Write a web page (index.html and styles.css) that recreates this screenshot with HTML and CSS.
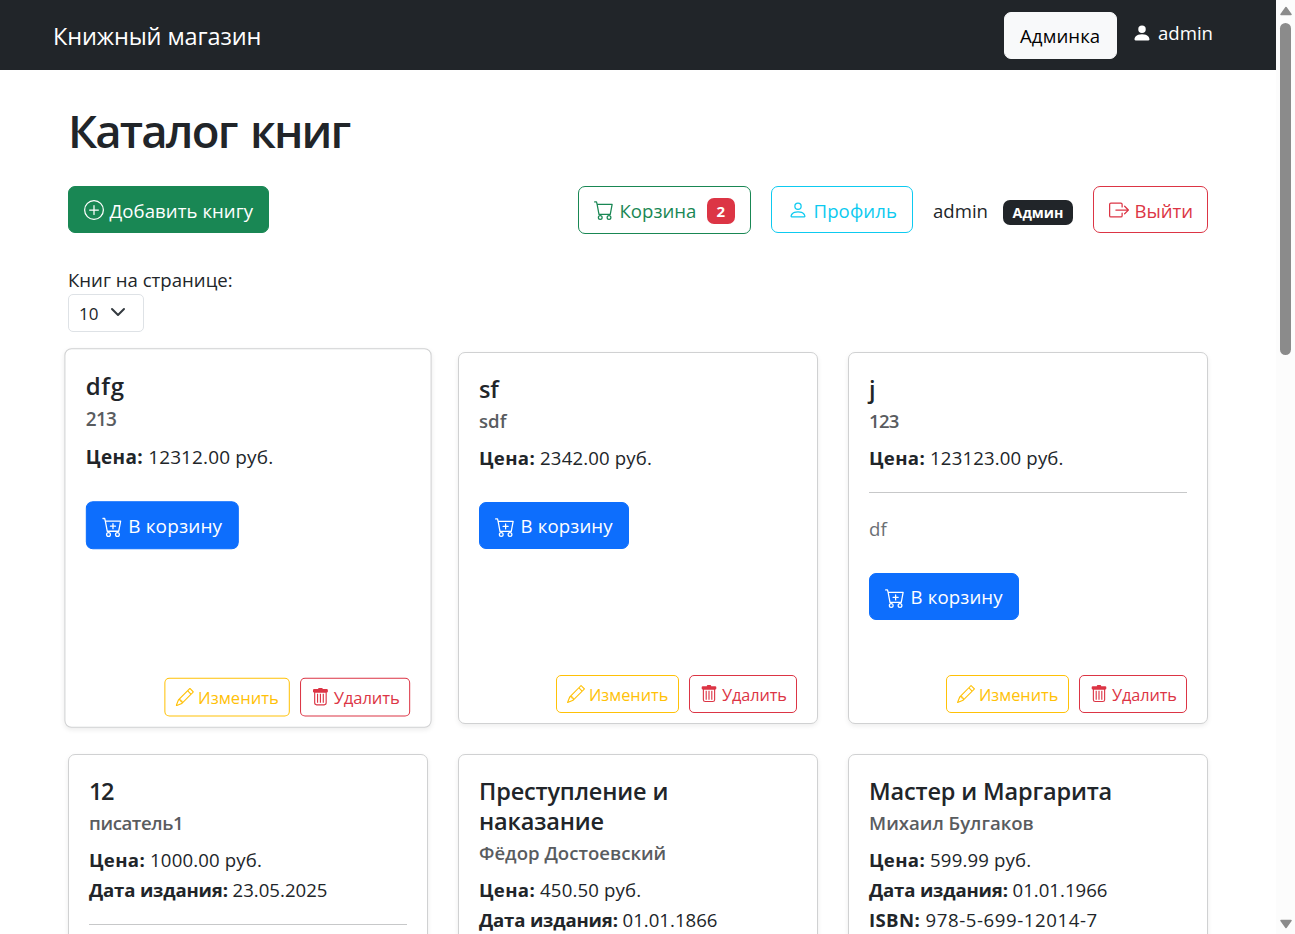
FILE: index.html
```
<!DOCTYPE html>
<html lang="ru">
<head>
<meta charset="utf-8">
<title>Книжный магазин</title>
<link rel="stylesheet" href="styles.css">
</head>
<body>
<svg class="sprite" aria-hidden="true">
  <symbol id="plus-circle" viewBox="0 0 16 16"><path d="M8 15A7 7 0 1 1 8 1a7 7 0 0 1 0 14m0 1A8 8 0 1 0 8 0a8 8 0 0 0 0 16"/><path d="M8 4a.5.5 0 0 1 .5.5v3h3a.5.5 0 0 1 0 1h-3v3a.5.5 0 0 1-1 0v-3h-3a.5.5 0 0 1 0-1h3v-3A.5.5 0 0 1 8 4"/></symbol>
  <symbol id="cart" viewBox="0 0 16 16"><path d="M0 1.500A.5.5 0 0 1 .5 1H2a.5.5 0 0 1 .485.379L2.890 3H14.500a.5.5 0 0 1 .491.592l-1.500 8A.5.5 0 0 1 13 12H4a.5.5 0 0 1-.491-.408L2.010 3.607 1.610 2H.5a.5.5 0 0 1-.5-.5M3.102 4l1.313 7h8.170l1.313-7zM5 12a2 2 0 1 0 0 4 2 2 0 0 0 0-4m7 0a2 2 0 1 0 0 4 2 2 0 0 0 0-4m-7 1a1 1 0 1 1 0 2 1 1 0 0 1 0-2m7 0a1 1 0 1 1 0 2 1 1 0 0 1 0-2"/></symbol>
  <symbol id="cart-plus" viewBox="0 0 16 16"><path d="M9 5.500a.5.5 0 0 0-1 0V7H6.500a.5.5 0 0 0 0 1H8v1.500a.5.5 0 0 0 1 0V8h1.500a.5.5 0 0 0 0-1H9z"/><path d="M.5 1a.5.5 0 0 0 0 1h1.110l.401 1.607 1.498 7.985A.5.5 0 0 0 4 12h1a2 2 0 1 0 0 4 2 2 0 0 0 0-4h7a2 2 0 1 0 0 4 2 2 0 0 0 0-4h1a.5.5 0 0 0 .491-.408l1.500-8A.5.5 0 0 0 14.500 3H2.890l-.405-1.621A.5.5 0 0 0 2 1zm3.915 10L3.102 4h10.796l-1.313 7zM6 14a1 1 0 1 1-2 0 1 1 0 0 1 2 0m7 0a1 1 0 1 1-2 0 1 1 0 0 1 2 0"/></symbol>
  <symbol id="person" viewBox="0 0 16 16"><path d="M8 8a3 3 0 1 0 0-6 3 3 0 0 0 0 6m2-3a2 2 0 1 1-4 0 2 2 0 0 1 4 0m4 8c0 1-1 1-1 1H3s-1 0-1-1 1-4 6-4 6 3 6 4m-1-.004c-.001-.246-.154-.986-.832-1.664C11.516 10.680 10.289 10 8 10s-3.516.680-4.168 1.332c-.678.678-.830 1.418-.832 1.664z"/></symbol>
  <symbol id="person-fill" viewBox="0 0 16 16"><path d="M3 14s-1 0-1-1 1-4 6-4 6 3 6 4-1 1-1 1zm5-6a3 3 0 1 0 0-6 3 3 0 0 0 0 6"/></symbol>
  <symbol id="exit" viewBox="0 0 16 16"><path fill-rule="evenodd" d="M10 12.500a.5.5 0 0 1-.5.5h-8a.5.5 0 0 1-.5-.5v-9a.5.5 0 0 1 .5-.5h8a.5.5 0 0 1 .5.5v2a.5.5 0 0 0 1 0v-2A1.500 1.500 0 0 0 9.500 2h-8A1.500 1.500 0 0 0 0 3.500v9A1.500 1.500 0 0 0 1.500 14h8a1.500 1.500 0 0 0 1.500-1.500v-2a.5.5 0 0 0-1 0z"/><path fill-rule="evenodd" d="M15.854 8.354a.5.5 0 0 0 0-.708l-3-3a.5.5 0 0 0-.708.708L14.293 7.500H5.500a.5.5 0 0 0 0 1h8.793l-2.147 2.146a.5.5 0 0 0 .708.708z"/></symbol>
  <symbol id="pencil" viewBox="0 0 16 16"><path d="M12.146.146a.5.5 0 0 1 .708 0l3 3a.5.5 0 0 1 0 .708l-10 10a.5.5 0 0 1-.168.110l-5 2a.5.5 0 0 1-.650-.650l2-5a.5.5 0 0 1 .110-.168zM11.207 2.500 13.500 4.793 14.793 3.500 12.500 1.207zm1.586 3L10.500 3.207 4 9.707V10h.5a.5.5 0 0 1 .5.5v.5h.5a.5.5 0 0 1 .5.5v.5h.293zm-9.761 5.175-.106.106-1.528 3.821 3.821-1.528.106-.106A.5.5 0 0 1 5 12.500V12h-.5a.5.5 0 0 1-.5-.5V11h-.5a.5.5 0 0 1-.468-.325"/></symbol>
  <symbol id="trash" viewBox="0 0 16 16"><path d="M2.500 1a1 1 0 0 0-1 1v1a1 1 0 0 0 1 1H13.500a1 1 0 0 0 1-1V2a1 1 0 0 0-1-1H10a1 1 0 0 0-1-1H7a1 1 0 0 0-1 1z"/><path fill-rule="evenodd" d="M2.500 3.500h11V13a2.200 2.200 0 0 1-2.200 2.200H4.700A2.200 2.200 0 0 1 2.500 13zM3.500 4v9a1.200 1.200 0 0 0 1.200 1.200h6.600a1.200 1.200 0 0 0 1.200-1.200V4zM5 5h1v8H5zm2.500 0h1v8h-1zM10 5h1v8h-1z"/></symbol>
</svg>
<div class="window">
  <div class="page">
    <nav class="navbar">
      <a class="brand">Книжный магазин</a>
      <div class="nav-right">
        <a class="btn btn-light">Админка</a>
        <span class="nav-user"><svg class="icon"><use href="#person-fill"/></svg><span>admin</span></span>
      </div>
    </nav>
    <main class="container">
      <h1 class="heading">Каталог книг</h1>
      <div class="toolbar">
        <a class="btn btn-success"><svg class="icon"><use href="#plus-circle"/></svg><span>Добавить книгу</span></a>
        <div class="actions">
          <a class="btn btn-cart"><svg class="icon"><use href="#cart"/></svg><span>Корзина</span><b class="count">2</b></a>
          <a class="btn btn-profile"><svg class="icon"><use href="#person"/></svg><span>Профиль</span></a>
          <span class="user">admin</span>
          <b class="role">Админ</b>
          <a class="btn btn-logout"><svg class="icon"><use href="#exit"/></svg><span>Выйти</span></a>
        </div>
      </div>
      <div class="per-page">
        <label class="per-page-label">Книг на странице:</label>
        <div class="select"><span>10</span><svg class="chevron" viewBox="0 0 16 16"><path d="m2 5 6 6 6-6"/></svg></div>
      </div>
      <div class="grid">
        <article class="card card-hover">
          <h5 class="title latin">dfg</h5><h6 class="author number">213</h6>
          <p class="info"><b>Цена:</b> 12312.00 руб.</p>
          <a class="btn btn-primary"><svg class="icon"><use href="#cart-plus"/></svg><span>В корзину</span></a>
          <div class="card-actions"><a class="btn-sm edit"><svg class="icon"><use href="#pencil"/></svg><span>Изменить</span></a><a class="btn-sm delete"><svg class="icon"><use href="#trash"/></svg><span>Удалить</span></a></div>
        </article>
        <article class="card">
          <h5 class="title">sf</h5><h6 class="author">sdf</h6>
          <p class="info"><b>Цена:</b> 2342.00 руб.</p>
          <a class="btn btn-primary"><svg class="icon"><use href="#cart-plus"/></svg><span>В корзину</span></a>
          <div class="card-actions"><a class="btn-sm edit"><svg class="icon"><use href="#pencil"/></svg><span>Изменить</span></a><a class="btn-sm delete"><svg class="icon"><use href="#trash"/></svg><span>Удалить</span></a></div>
        </article>
        <article class="card">
          <h5 class="title">j</h5><h6 class="author number">123</h6>
          <p class="info"><b>Цена:</b> 123123.00 руб.</p>
          <hr class="rule">
          <p class="description">df</p>
          <a class="btn btn-primary"><svg class="icon"><use href="#cart-plus"/></svg><span>В корзину</span></a>
          <div class="card-actions"><a class="btn-sm edit"><svg class="icon"><use href="#pencil"/></svg><span>Изменить</span></a><a class="btn-sm delete"><svg class="icon"><use href="#trash"/></svg><span>Удалить</span></a></div>
        </article>
        <article class="card">
          <h5 class="title number title-number">12</h5><h6 class="author pen-name">писатель1</h6>
          <p class="info"><b>Цена:</b> 1000.00 руб.<br><span class="date"><b>Дата издания:</b> 23.05.2025</span></p>
          <hr class="rule">
        </article>
        <article class="card">
          <h5 class="title">Преступление и<br>наказание</h5><h6 class="author">Фёдор Достоевский</h6>
          <p class="info"><b>Цена:</b> 450.50 руб.<br><span class="date"><b>Дата издания:</b> 01.01.1866</span></p>
        </article>
        <article class="card">
          <h5 class="title">Мастер и Маргарита</h5><h6 class="author">Михаил Булгаков</h6>
          <p class="info"><b>Цена:</b> 599.99 руб.<br><span class="date"><b>Дата издания:</b> 01.01.1966</span><br><span class="isbn"><b>ISBN:</b> 978-5-699-12014-7</span></p>
        </article>
      </div>
    </main>
  </div>
  <aside class="scrollbar">
    <svg class="arrow" viewBox="0 0 12 10"><path d="M6 1.500 11 8.500H1z"/></svg>
    <div class="thumb"></div>
    <svg class="arrow arrow-down" viewBox="0 0 12 10"><path d="M6 8.500 11 1.500H1z"/></svg>
  </aside>
</div>
</body>
</html>
```
FILE: styles.css
```
* { box-sizing: border-box; }
body {
  margin: 0;
  background: #fff;
  color: #212529;
  font-family: "Open Sans", "Noto Sans", sans-serif;
  font-size: 18.6px;
  line-height: 30px;
  overflow: hidden;
}
h1, h5, h6, p { margin: 0; }
.sprite { position: absolute; width: 0; height: 0; }
.window { display: flex; width: 1295px; height: 934px; overflow: hidden; }
.page { width: 1276px; height: 934px; overflow: hidden; }
.icon { width: 20px; height: 20px; fill: currentColor; flex: none; }

.navbar { display: flex; justify-content: space-between; height: 70px; padding: 12px 62px 0 53px; background: #212529; color: #fff; }
.brand { padding-top: 9px; font-size: 23.5px; letter-spacing: -.12px; }
.nav-right { display: flex; gap: 15px; }
.nav-user { display: flex; gap: 6px; padding-top: 6px; white-space: nowrap; width: 82px; }
.nav-user .icon { margin-top: 5px; }

.btn { display: flex; align-items: center; height: 47px; padding: 3px 15px 0; border: 1px solid; border-radius: 7px; white-space: nowrap; }
.btn .icon { margin-top: -3px; }
.btn span { margin-left: 5.5px; }
.btn-light { width: 113px; padding-top: 1px; background: #f8f9fa; border-color: #f8f9fa; color: #000; letter-spacing: .1px; }
.btn-success { width: 201px; background: #198754; color: #fff; border-color: #198754; letter-spacing: .06px; }
.btn-cart { width: 173px; height: 48px; padding-top: 1px; color: #198754; }
.btn-cart .icon { margin-top: -1px; }
.btn-profile { width: 142px; padding-left: 16px; color: #0dcaf0; letter-spacing: .1px; }
.btn-logout { width: 115px; color: #dc3545; }
.btn-primary { width: 150px; padding-top: 1px; margin-top: 29px; background: #0d6efd; border-color: #0d6efd; color: #fff; flex: none; letter-spacing: .15px; }
.btn-primary .icon { margin-top: 1px; }

.container { padding: 30px 68px 0; }
.heading { height: 60px; font-size: 45.5px; font-weight: 600; line-height: 60px; letter-spacing: -1.85px; word-spacing: 3.5px; }
.toolbar { display: flex; justify-content: space-between; height: 48px; margin-top: 26px; }
.actions { display: flex; }
.actions .btn-profile { margin-left: 20px; }
.count { width: 28px; height: 26px; margin: 1px 0 0 10.5px; border-radius: 7px; background: #dc3545; color: #fff; font-size: 15px; line-height: 27px; text-align: center; }
.user { width: 55px; margin: 10px 0 0 20px; }
.role { width: 70px; height: 25px; margin: 14px 20px 0 15px; border-radius: 7px; background: #212529; color: #fff; font-size: 14.2px; line-height: 26px; text-align: center; }
.per-page { margin-top: 31px; }
.per-page-label { display: block; height: 29px; line-height: 29px; }
.select { display: flex; align-items: center; justify-content: space-between; width: 76px; height: 38px; padding: 2px 17px 0 10px; border: 1px solid #dee2e6; border-radius: 5px; font-size: 17px; }
.chevron { width: 16px; height: 16px; margin-top: -4px; fill: none; stroke: #343a40; stroke-width: 2; stroke-linecap: round; stroke-linejoin: round; }

.grid { display: grid; grid-template-columns: repeat(3, 360px); grid-auto-rows: 372px; gap: 30px; margin-top: 20px; }
.card { display: flex; flex-direction: column; padding: 20px 20px 10px; border: 1px solid #d0d1d2; border-radius: 7px; background: #fff; box-shadow: 0 2px 5px rgba(0,0,0,.075); }
.card-hover { transform: scale(1.02); }
.title { font-size: 23.5px; font-weight: 600; line-height: 30px; padding-top: 1px; letter-spacing: -.15px; }
.author { margin-top: 5px; font-size: 18.6px; font-weight: 600; line-height: 24px; color: #595c5f; }
.number { letter-spacing: -.7px; }
.title-number { letter-spacing: -1.5px; }
.latin { letter-spacing: .6px; }
.pen-name { letter-spacing: -.4px; }
.info { margin-top: 10px; white-space: nowrap; letter-spacing: .15px; }
.info b { letter-spacing: .35px; }
.date { letter-spacing: 0; }
.date b { letter-spacing: -.18px; }
.isbn { letter-spacing: .6px; }
.rule { width: 100%; height: 1px; margin: 19px 0 21px; border: 0; background: #c7c8c9; }
.description { color: #6c7074; }
.card-actions { display: flex; justify-content: flex-end; gap: 10px; margin-top: auto; }
.btn-sm { display: flex; align-items: center; height: 38px; padding: 2px 10px 0; border: 1px solid; border-radius: 5px; font-size: 16.3px; white-space: nowrap; }
.btn-sm .icon { width: 18px; height: 18px; margin: -3px 4px 0 0; }
.edit { width: 123px; color: #ffc107; }
.delete { width: 108px; color: #dc3545; letter-spacing: -.1px; }

.scrollbar { display: flex; flex-direction: column; align-items: center; width: 19px; height: 934px; padding: 6px 0 5px; background: #fcfcfc; }
.arrow { width: 12px; height: 10px; fill: #8b8b8b; stroke: #8b8b8b; stroke-width: 1.5; stroke-linejoin: round; }
.thumb { width: 11px; height: 332px; margin-top: 7px; border-radius: 6px; background: #8b8b8b; }
.arrow-down { margin-top: auto; }
```
